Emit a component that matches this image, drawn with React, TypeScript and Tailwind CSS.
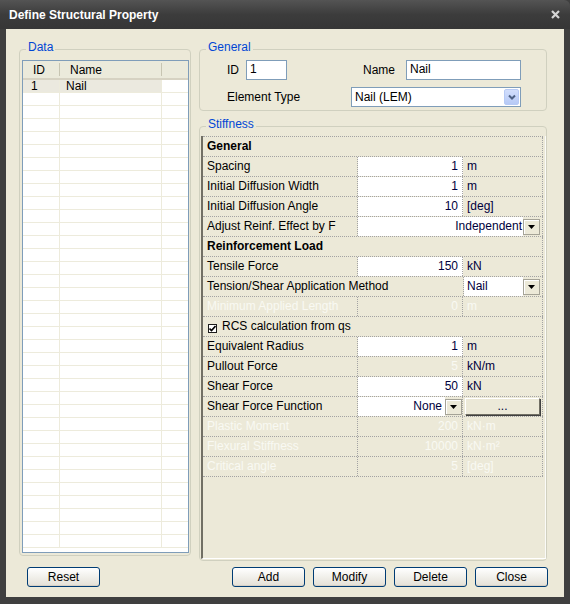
import React from "react";

const D = "border-dotted border-[#a3a3a3]";
const NAVY = "text-[#00003c]";
const DIS = "text-[#f9f9f3]";

function MiniDrop() {
  return (
    <div className="w-[17px] h-[16px] shrink-0 border border-[#a5a397] bg-[#ece9d8] flex items-center justify-center shadow-[inset_1px_1px_0_#ffffff]">
      <svg width="7" height="4" viewBox="0 0 7 4">
        <path d="M0 0H7L3.5 4Z" fill="#000" />
      </svg>
    </div>
  );
}

function Header({ children }: { children: React.ReactNode }) {
  return (
    <div className={`flex h-[20px] w-[340px] border-b border-r ${D} pl-[4px] font-bold leading-[19px] text-black`}>
      {children}
    </div>
  );
}

function Prop({
  name,
  value,
  unit,
  dis,
  valDis,
  white,
}: {
  name: string;
  value?: string;
  unit?: string;
  dis?: boolean;
  valDis?: boolean;
  white?: boolean;
}) {
  return (
    <div className={`flex h-[20px] w-[340px] border-b ${D}`}>
      <div className={`w-[155px] shrink-0 border-r ${D} pl-[4px] leading-[19px] whitespace-nowrap overflow-hidden ${dis ? DIS : "text-black"}`}>
        {name}
      </div>
      <div className={`w-[105px] shrink-0 border-r ${D} pr-[4px] text-right leading-[19px] ${white ? "bg-white" : ""} ${dis || valDis ? DIS : NAVY}`}>
        {value}
      </div>
      <div className={`w-[80px] shrink-0 border-r ${D} pl-[4px] leading-[19px] ${dis ? DIS : NAVY}`}>{unit}</div>
    </div>
  );
}

function Btn({ children }: { children: React.ReactNode }) {
  return (
    <div className="w-[73px] h-[20px] rounded-[3px] border border-[#003c74] bg-linear-to-b from-[#ffffff] to-[#e3e0d6] text-[12px] text-black leading-[18px] text-center shadow-[inset_0_-1px_0_#d6d0c5]">
      {children}
    </div>
  );
}

export default function App() {
  const rows = Array.from({ length: 36 }, (_, i) => i);
  return (
    <div className="w-[570px] h-[604px] bg-[#3f3f3f] flex flex-col font-['Liberation_Sans',Arial,sans-serif] text-[12px]">
      {/* title bar */}
      <div className="h-[29px] shrink-0 flex items-center justify-between pl-[9px] pr-[10px] bg-linear-to-b from-[#545454] via-[#3c3c3c] to-[#363636] rounded-tr-[6px]">
        <span className="text-white font-bold text-[12px] leading-[14px]">Define Structural Property</span>
        <svg width="9" height="9" viewBox="0 0 9 9">
          <path d="M1 1L8 8M8 1L1 8" stroke="#d4d4d4" strokeWidth="2.2" />
        </svg>
      </div>
      {/* body */}
      <div className="mx-[6px] h-[568px] bg-[#ece9d8] flex flex-col pt-[11px]">
        <div className="h-[521px] flex items-start pl-[13px] gap-[8px]">
          {/* Data */}
          <fieldset className="w-[172px] border border-[#d0d0bf] rounded-[4px]">
            <legend className="ml-[6px] px-[2px] pb-[4px] leading-[14px] text-[#0046d5]">Data</legend>
            <div className="ml-[2px] mt-[2px] mb-[2px] w-[167px] h-[493px] border border-[#7f9db9] bg-white overflow-hidden flex flex-col">
              <div className="flex h-[19px] shrink-0 bg-[#ebeadb] border-b-2 border-[#d6d2c2] text-black">
                <div className="w-[37px] flex items-center">
                  <span className="flex-1 pl-[10px] leading-[16px]">ID</span>
                  <div className="w-px h-[13px] bg-[#c7c5b2]" />
                </div>
                <div className="w-[102px] flex items-center">
                  <span className="flex-1 pl-[10px] leading-[16px]">Name</span>
                  <div className="w-px h-[13px] bg-[#c7c5b2]" />
                </div>
                <div className="flex-1" />
              </div>
              {rows.map((i) => (
                <div key={i} className="flex h-[13px] shrink-0 border-b border-[#edebdc] leading-[12px] text-black">
                  <div className={`w-[37px] border-r border-[#edebdc] pl-[8px] ${i === 0 ? "bg-[#ebe9df]" : ""}`}>
                    {i === 0 ? "1" : ""}
                  </div>
                  <div className={`w-[102px] border-r border-[#edebdc] pl-[6px] ${i === 0 ? "bg-[#ebe9df]" : ""}`}>
                    {i === 0 ? "Nail" : ""}
                  </div>
                  <div className="flex-1" />
                </div>
              ))}
            </div>
          </fieldset>
          {/* right column */}
          <div className="w-[348px] flex flex-col">
            <fieldset className="border border-[#d0d0bf] rounded-[4px] pb-[3px]">
              <legend className="ml-[6px] px-[2px] pb-[4px] leading-[14px] text-[#0046d5]">General</legend>
              <div className="flex items-center mt-[2px] pl-[27px] h-[20px] text-black">
                <span className="w-[19px]">ID</span>
                <div className="w-[41px] h-[20px] border border-[#7f9db9] bg-white pl-[3px] leading-[16px]">1</div>
                <span className="ml-[76px] w-[43px]">Name</span>
                <div className="w-[115px] h-[20px] border border-[#7f9db9] bg-white pl-[3px] leading-[16px]">Nail</div>
              </div>
              <div className="flex items-center mt-[7px] pl-[27px] h-[20px] text-black">
                <span className="w-[124px]">Element Type</span>
                <div className="w-[170px] h-[20px] border border-[#7f9db9] bg-white flex items-center">
                  <span className="flex-1 pl-[3px] leading-[16px]">Nail (LEM)</span>
                  <div className="w-[15px] h-[16px] mr-[1px] rounded-[2px] border border-[#b7caf5] bg-linear-to-b from-[#d2defc] to-[#b6c9f6] flex items-center justify-center">
                    <svg width="8" height="6" viewBox="0 0 8 6">
                      <path d="M1 1.5L4 4.5L7 1.5" stroke="#4d6185" strokeWidth="2" fill="none" />
                    </svg>
                  </div>
                </div>
              </div>
            </fieldset>
            <fieldset className="mt-[6px] h-[444px] border border-[#d0d0bf] rounded-[4px]">
              <legend className="ml-[6px] px-[2px] pb-[5px] leading-[14px] text-[#0046d5]">Stiffness</legend>
              <div className="ml-[1px] w-[345px] h-[423px] border-l-2 border-l-[#716f64] border-r border-r-[#fbfbf8] border-b border-b-white">
                <div className={`border-t ${D} w-[340px]`} />
                <Header>General</Header>
                <Prop name="Spacing" value="1" unit="m" white />
                <Prop name="Initial Diffusion Width" value="1" unit="m" white />
                <Prop name="Initial Diffusion Angle" value="10" unit="[deg]" white />
                <div className={`flex h-[20px] w-[340px] border-b ${D}`}>
                  <div className={`w-[155px] shrink-0 border-r ${D} pl-[4px] leading-[19px] whitespace-nowrap overflow-hidden text-black`}>
                    Adjust Reinf. Effect by F
                  </div>
                  <div className={`w-[185px] shrink-0 border-r ${D} flex items-center pr-[2px]`}>
                    <div className={`flex-1 h-full bg-white text-right pr-[1px] leading-[19px] ${NAVY}`}>Independent</div>
                    <MiniDrop />
                  </div>
                </div>
                <Header>Reinforcement Load</Header>
                <Prop name="Tensile Force" value="150" unit="kN" white />
                <div className={`flex h-[20px] w-[340px] border-b ${D}`}>
                  <div className="w-[260px] shrink-0 pl-[4px] leading-[19px] whitespace-nowrap text-black">
                    Tension/Shear Application Method
                  </div>
                  <div className={`w-[80px] shrink-0 border-r border-l ${D} flex items-center pr-[2px]`}>
                    <div className={`flex-1 h-full bg-white pl-[3px] leading-[19px] ${NAVY}`}>Nail</div>
                    <MiniDrop />
                  </div>
                </div>
                <Prop name="Minimum Applied Length" value="0" unit="m" dis />
                <div className={`flex items-center h-[20px] w-[340px] border-b border-r ${D} pl-[5px] text-black`}>
                  <div className="w-[9px] h-[9px] mt-[4px] border border-[#1c1c1c] bg-white flex items-center justify-center">
                    <svg width="7" height="7" viewBox="0 0 7 7">
                      <path d="M0.5 3.5L2.5 5.5L6.5 1" stroke="#000" strokeWidth="1.6" fill="none" />
                    </svg>
                  </div>
                  <span className="ml-[5px] leading-[19px]">RCS calculation from qs</span>
                </div>
                <Prop name="Equivalent Radius" value="1" unit="m" white />
                <Prop name="Pullout Force" value="5" unit="kN/m" valDis />
                <Prop name="Shear Force" value="50" unit="kN" white />
                <div className={`flex h-[20px] w-[340px] border-b ${D}`}>
                  <div className={`w-[155px] shrink-0 border-r ${D} pl-[4px] leading-[19px] whitespace-nowrap overflow-hidden text-black`}>
                    Shear Force Function
                  </div>
                  <div className={`w-[105px] shrink-0 border-r ${D} flex items-center`}>
                    <div className={`flex-1 h-full bg-white text-right pr-[3px] leading-[19px] ${NAVY}`}>None</div>
                    <MiniDrop />
                  </div>
                  <div className={`w-[80px] shrink-0 border-r ${D} flex items-center pl-[2px] pr-[2px]`}>
                    <div className={`w-full h-[17px] border border-t-white border-l-white border-r-[#716f64] border-b-[#716f64] bg-[#ece9d8] shadow-[1px_1px_0_#404040] text-center leading-[15px] ${NAVY}`}>
                      ...
                    </div>
                  </div>
                </div>
                <Prop name="Plastic Moment" value="200" unit="kN·m" dis />
                <Prop name="Flexural Stiffness" value="10000" unit="kN·m²" dis />
                <Prop name="Critical angle" value="5" unit="[deg]" dis />
              </div>
            </fieldset>
          </div>
        </div>
        <div className="mt-[6px] h-[20px] flex justify-between pl-[21px] pr-[16px]">
          <Btn>Reset</Btn>
          <div className="flex gap-[8px]">
            <Btn>Add</Btn>
            <Btn>Modify</Btn>
            <Btn>Delete</Btn>
            <Btn>Close</Btn>
          </div>
        </div>
      </div>
    </div>
  );
}
